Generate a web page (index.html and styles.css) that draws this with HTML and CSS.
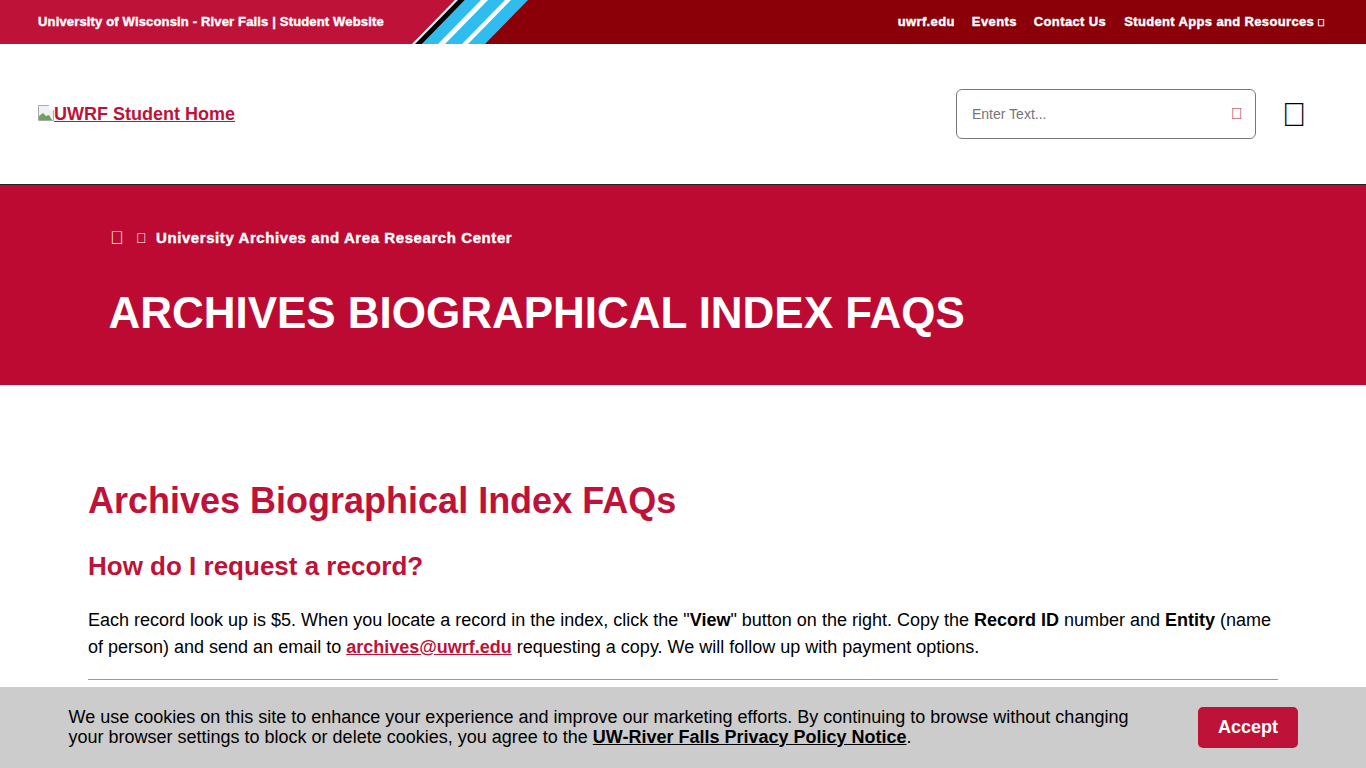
FILE: index.html
```html
<!DOCTYPE html>
<html lang="en">
<head>
<meta charset="utf-8">
<title>Archives Biographical Index FAQs</title>
<link rel="stylesheet" href="styles.css">
</head>
<body>
<div class="topbar">
  <div class="top-left"><a href="#">University of Wisconsin - River Falls | Student Website</a></div>
  <svg class="stripes" width="130" height="44" viewBox="0 0 130 44" aria-hidden="true">
    <polygon points="7,44 50,0 60,0 17,44" fill="#fff"/>
    <polygon points="10,44 53,0 60,0 17,44" fill="#000"/>
    <polygon points="17,44 60,0 123,0 80,44" fill="#2fbdf0"/>
    <polygon points="33,44 76,0 83,0 40,44" fill="#fff"/>
    <polygon points="57,44 100,0 106,0 63,44" fill="#fff"/>
  </svg>
  <nav class="top-right">
    <a href="#">uwrf.edu</a>
    <a href="#">Events</a>
    <a href="#">Contact Us</a>
    <a class="top-apps" href="#">Student Apps and Resources<span class="tofu">&#xf107;</span></a>
  </nav>
</div>
<header class="header">
  <a class="logo" href="#"><svg class="broken" width="16" height="16" viewBox="0 0 16 16" aria-hidden="true"><path d="M.5.5h10l5 5v10H.5z" fill="#eef2f6" stroke="#a9a9a9"/><path d="M1 15v-4l4-3 3 3 3-1 3 5z" fill="#6fa35b"/><path d="M11 0l5 5h-5z" fill="#fff"/></svg>UWRF Student Home</a>
  <div class="header-tools">
    <form class="search">
      <input class="search-input" type="text" placeholder="Enter Text...">
      <span class="search-icon">&#xf002;</span>
    </form>
    <span class="menu-icon">&#xf0c9;</span>
  </div>
</header>
<section class="hero">
  <div class="crumbs">
    <span class="crumb-home">&#xf015;</span>
    <span class="crumb-sep">&#xf105;</span>
    <a href="#">University Archives and Area Research Center</a>
  </div>
  <h1>ARCHIVES BIOGRAPHICAL INDEX FAQS</h1>
</section>
<main class="content">
  <h2>Archives Biographical Index FAQs</h2>
  <h3>How do I request a record?</h3>
  <p>Each record look up is $5. When you locate a record in the index, click the "<strong>View</strong>" button on the right. Copy the <strong>Record ID</strong> number and <strong>Entity</strong> (name of person) and send an email to <a href="#">archives@uwrf.edu</a> requesting a copy. We will follow up with payment options.</p>
  <hr>
</main>
<div class="cookie">
  <p>We use cookies on this site to enhance your experience and improve our marketing efforts. By continuing to browse without changing your browser settings to block or delete cookies, you agree to the <a href="#">UW-River Falls Privacy Policy Notice</a>.</p>
  <button class="accept" type="button">Accept</button>
</div>
</body>
</html>
```
FILE: styles.css
```css
* { box-sizing: border-box; }
html, body { height: 100%; }
body {
  margin: 0;
  overflow: hidden;
  font-family: "Liberation Sans", Arial, sans-serif;
  color: #000;
  background: #fff;
}
.topbar {
  position: relative;
  display: flex;
  justify-content: space-between;
  align-items: center;
  height: 44px;
  background: linear-gradient(to right, #be1238 0, #be1238 470px, #8b0008 470px);
  padding: 0 41px 2px 38px;
}
.topbar a {
  color: #fff;
  text-decoration: none;
  font-size: 13px;
  font-weight: 700;
  -webkit-text-stroke: .4px #fff;
}
.top-left a { letter-spacing: .16px; }
.top-right a { letter-spacing: .38px; }
.top-right .top-apps { margin-left: 1px; letter-spacing: .35px; }
.stripes { position: absolute; left: 405px; top: 0; }
.top-right { display: flex; gap: 17px; }
.tofu { font-size: 10px; margin-left: 3px; }
.header {
  display: flex;
  justify-content: space-between;
  align-items: center;
  height: 141px;
  padding: 0 62px 0 38px;
  border-bottom: 1px solid #222;
}
.logo {
  display: flex;
  align-items: center;
  color: #be1238;
  font-size: 18px;
  font-weight: 700;
}
.broken { flex: none; margin-top: -3px; }
.header-tools { display: flex; align-items: center; gap: 26px; }
.search { position: relative; width: 300px; height: 50px; }
.search-input {
  width: 100%;
  height: 100%;
  padding: 0 15px;
  border: 1px solid #777;
  border-radius: 6px;
  font: 14px "Liberation Sans", Arial, sans-serif;
  background: #fff;
}
.search-input::placeholder { color: #757575; }
.search-icon {
  position: absolute;
  right: 13px;
  top: 16px;
  color: #a8234a;
  font-size: 16px;
}
.menu-icon { font-size: 33px; line-height: 30px; width: 22px; margin-top: 1px; color: #000; }
.hero {
  height: 200px;
  background: #bd0a32;
  padding: 41px 108px 0;
  color: #fff;
}
.crumbs {
  display: flex;
  align-items: center;
  height: 24px;
  font-size: 14px;
  font-weight: 700;
}
.crumbs a {
  color: #fff;
  text-decoration: none;
  font-size: 15px;
  line-height: 20px;
  padding-bottom: 1px;
  letter-spacing: .58px;
  -webkit-text-stroke: .4px #fff;
}
.crumb-home { width: 28px; padding-left: 2px; font-size: 18px; }
.crumb-sep { width: 20px; font-size: 14px; }
.hero h1 {
  margin: 35px 0 0;
  padding-left: .5px;
  font-size: 44px;
  letter-spacing: -.03px;
  line-height: 56px;
  font-weight: 700;
}
.content { padding: 96px 88px 0; }
.content h2 {
  margin: 0;
  color: #be1238;
  font-size: 36px;
  line-height: 40px;
}
.content h3 {
  margin: 30px 0 0;
  color: #be1238;
  font-size: 26px;
  line-height: 30px;
}
.content p {
  margin: 26px 0 0;
  font-size: 18px;
  line-height: 27px;
}
.content p a { color: #be1238; font-weight: 700; }
.content hr {
  margin: 18px 0 0;
  border: 0;
  border-top: 1px solid #999;
}
.cookie {
  position: fixed;
  left: 0;
  right: 0;
  bottom: 0;
  height: 81px;
  background: #ccc;
  display: flex;
  align-items: center;
  justify-content: space-between;
  padding: 0 68px;
}
.cookie p {
  margin: -2px 0 0 .5px;
  width: 1070px;
  font-size: 18px;
  line-height: 20px;
}
.cookie a { color: #000; font-weight: 700; }
.accept {
  width: 100px;
  height: 41px;
  border: 0;
  border-radius: 5px;
  background: #be1238;
  color: #fff;
  font: 700 18px "Liberation Sans", Arial, sans-serif;
}
```
